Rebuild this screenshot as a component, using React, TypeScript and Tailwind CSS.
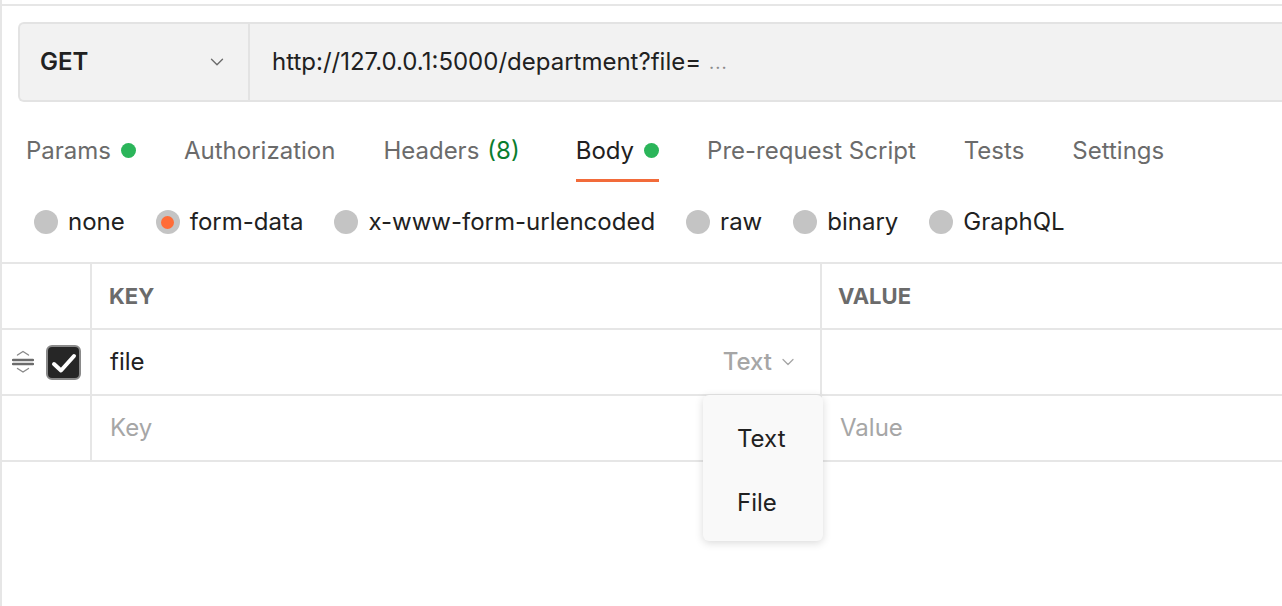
import { ChevronDown } from 'lucide-react';

const tabs = [
  { label: 'Params', dot: true },
  { label: 'Authorization' },
  { label: 'Headers', count: '(8)' },
  { label: 'Body', dot: true, active: true },
  { label: 'Pre-request Script' },
  { label: 'Tests' },
  { label: 'Settings' },
];

const bodyTypes = ['none', 'form-data', 'x-www-form-urlencoded', 'raw', 'binary', 'GraphQL'];

function DragHandle() {
  return (
    <svg width="22" height="24" viewBox="0 0 22 24" fill="none" strokeLinecap="round">
      <path d="M5.5 5 L11 1.5 L16.5 5" stroke="#8a8a8a" strokeWidth="1.4" />
      <path d="M1 10 H21" stroke="#6b6b6b" strokeWidth="2.4" />
      <path d="M1 14 H21" stroke="#6b6b6b" strokeWidth="2.4" />
      <path d="M5.5 18.5 L11 22 L16.5 18.5" stroke="#8a8a8a" strokeWidth="1.4" />
    </svg>
  );
}

function Radio({ selected }: { selected?: boolean }) {
  return (
    <span className="w-[24px] h-[24px] rounded-full bg-[#c4c4c4] flex items-center justify-center">
      {selected && <span className="w-[13px] h-[13px] rounded-full bg-[#ff6c37]" />}
    </span>
  );
}

export default function App() {
  return (
    <div className="relative w-[1282px] h-[606px] overflow-hidden bg-white border-l-2 border-[#e6e6e6] font-['Inter',sans-serif] text-[#212121]">
      <div className="mt-[4px] border-t-2 border-[#e6e6e6]" />

      {/* request url bar */}
      <div className="ml-[16px] mt-[16px] h-[80px] flex bg-[#f2f2f2] border-2 border-r-0 border-[#e3e3e3] rounded-l-[6px]">
        <div className="w-[230px] flex items-center justify-between pl-[20px] pr-[20px] border-r-2 border-[#e3e3e3]">
          <span className="text-[24px] font-semibold">GET</span>
          <ChevronDown size={22} strokeWidth={1.5} className="text-[#6b6b6b]" />
        </div>
        <div className="flex items-center pl-[22px] text-[24px]">
          <span>http://127.0.0.1:5000/department?file=</span>
          <span className="ml-[8px] text-[#8a8a8a] text-[18px] tracking-[1px]">...</span>
        </div>
      </div>

      {/* tabs */}
      <div className="flex pl-[24px] mt-[20px] h-[60px] gap-[48px]">
        {tabs.map((t) => (
          <div
            key={t.label}
            className={`flex items-center gap-[10px] text-[24px] border-b-[3px] ${
              t.active ? 'border-[#f26b3a] text-[#212121]' : 'border-transparent text-[#6b6b6b]'
            } ${t.count ? 'mr-[8px]' : ''}`}
          >
            <span>
              {t.label}
              {t.count && <span className="ml-[8px] text-[#0a7d2e]">{t.count}</span>}
            </span>
            {t.dot && <span className="w-[15px] h-[15px] rounded-full bg-[#2bb55a]" />}
          </div>
        ))}
      </div>

      {/* body types */}
      <div className="flex items-center pl-[32px] h-[80px] gap-[31px]">
        {bodyTypes.map((b) => (
          <label key={b} className="flex items-center gap-[10px] text-[24px]">
            <Radio selected={b === 'form-data'} />
            <span>{b}</span>
          </label>
        ))}
      </div>

      {/* form table */}
      <div className="border-t-2 border-[#e6e6e6]">
        <div className="flex h-[66px] border-b-2 border-[#e6e6e6]">
          <div className="w-[90px] border-r-2 border-[#e6e6e6]" />
          <div className="w-[730px] border-r-2 border-[#e6e6e6] flex items-center pl-[17px] text-[22px] font-bold text-[#6b6b6b]">
            KEY
          </div>
          <div className="flex-1 flex items-center pl-[16px] text-[22px] font-bold text-[#6b6b6b]">VALUE</div>
        </div>
        <div className="flex h-[66px] border-b-2 border-[#e6e6e6]">
          <div className="w-[90px] border-r-2 border-[#e6e6e6] flex items-center pl-[10px] gap-[12px]">
            <DragHandle />
            <span className="w-[35px] h-[35px] rounded-[6px] bg-[#262626] border-2 border-[#8a8a8a] flex items-center justify-center">
              <svg width="31" height="31" viewBox="0 0 31 31" fill="none" stroke="white" strokeWidth="4" strokeLinecap="round" strokeLinejoin="round">
                <path d="M6 17 L13 23.5 L26 9" />
              </svg>
            </span>
          </div>
          <div className="w-[730px] border-r-2 border-[#e6e6e6] flex items-center justify-between pl-[18px] pr-[22px] text-[24px]">
            <span>file</span>
            <span className="flex items-center gap-[6px] text-[#a6a6a6] font-medium">
              Text
              <ChevronDown size={20} strokeWidth={1.5} />
            </span>
          </div>
          <div className="flex-1" />
        </div>
        <div className="flex h-[66px] border-b-2 border-[#e6e6e6]">
          <div className="w-[90px] border-r-2 border-[#e6e6e6]" />
          <div className="w-[730px] border-r-2 border-[#e6e6e6] flex items-center pl-[18px] text-[24px] text-[#a6a6a6]">
            Key
          </div>
          <div className="flex-1 flex items-center pl-[18px] text-[24px] text-[#a6a6a6]">Value</div>
        </div>
      </div>

      {/* type dropdown */}
      <div className="absolute left-[701px] top-[395px] w-[120px] h-[146px] bg-[#f9f9f9] rounded-[6px] shadow-[0_2px_8px_rgba(0,0,0,0.15)] flex flex-col justify-center gap-[34px] pl-[34px] pt-[6px] text-[24px]">
        <span className="leading-[30px]">Text</span>
        <span className="leading-[30px]">File</span>
      </div>
    </div>
  );
}
